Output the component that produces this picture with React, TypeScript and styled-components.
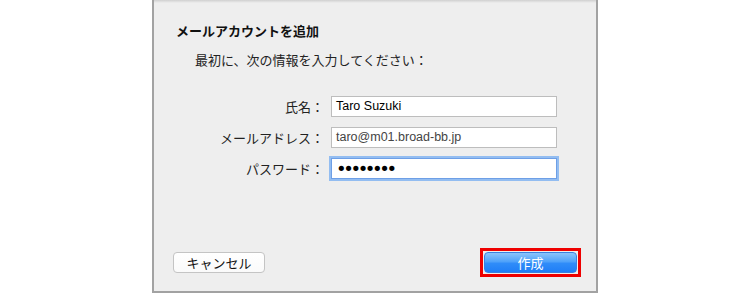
import React from 'react';
import styled, { createGlobalStyle } from 'styled-components';

const GlobalStyle = createGlobalStyle`
  html, body {
    margin: 0;
    padding: 0;
    background: #ffffff;
  }
  body {
    font-family: "Noto Sans CJK JP", "Liberation Sans", sans-serif;
  }
`;

type Field = {
  label: string,
  value: string,
  focused?: boolean,
  muted?: boolean,
}

const fields: Field[] = [
  { label: '氏名：', value: 'Taro Suzuki' },
  { label: 'メールアドレス：', value: 'taro@m01.broad-bb.jp', muted: true },
  { label: 'パスワード：', value: '••••••••', focused: true },
];

export default function App() {
  return (
    <>
      <GlobalStyle />
      <Page>
        <Panel>
          <Title>メールアカウントを追加</Title>
          <Lead>最初に、次の情報を入力してください：</Lead>
          <Form>
            {fields.map((f) => (
              <React.Fragment key={f.label}>
                <Label>{f.label}</Label>
                <Input $focused={f.focused} $muted={f.muted}>
                  {f.focused ? <Dots>{f.value}</Dots> : f.value}
                </Input>
              </React.Fragment>
            ))}
          </Form>
          <Footer>
            <CancelButton>キャンセル</CancelButton>
            <Highlight>
              <PrimaryButton>作成</PrimaryButton>
            </Highlight>
          </Footer>
        </Panel>
      </Page>
    </>
  );
}

const Page = styled.div`
  width: 750px;
  height: 294px;
  display: flex;
  padding-left: 152px;
  box-sizing: border-box;
`;

const Panel = styled.div`
  width: 446px;
  height: 293px;
  box-sizing: border-box;
  background: linear-gradient(#cfcfcf 0px, #e4e4e4 2px, #eeeeee 3px, #eeeeee 100%);
  border: 2px solid #a2a2a2;
  border-top: none;
  display: flex;
  flex-direction: column;
`;

const Title = styled.div`
  margin: 22px 0 0 22px;
  font-size: 13px;
  line-height: 18px;
  font-weight: bold;
  color: #111;
`;

const Lead = styled.div`
  margin: 11px 0 0 41px;
  font-size: 13px;
  line-height: 18px;
  color: #222;
`;

const Form = styled.div`
  margin: 27px 0 0 22px;
  display: grid;
  grid-template-columns: 148px 226px;
  column-gap: 7px;
  row-gap: 10px;
  align-items: center;
`;

const Label = styled.div`
  text-align: right;
  font-size: 13px;
  line-height: 21px;
  color: #222;
`;

const Input = styled.div<{ $focused?: boolean, $muted?: boolean }>`
  height: 21px;
  box-sizing: border-box;
  background: #ffffff;
  border: 1px solid ${(p) => (p.$focused ? '#6e9fe6' : '#bdbdbd')};
  box-shadow: ${(p) => (p.$focused ? '0 0 0 2px #93bdf1' : 'none')};
  padding-left: 4px;
  font-family: "Liberation Sans", "DejaVu Sans", sans-serif;
  font-size: 12.5px;
  line-height: 19px;
  color: ${(p) => (p.$muted ? '#444' : '#000')};
  white-space: nowrap;
`;

const Dots = styled.span`
  display: inline-block;
  font-family: "DejaVu Sans", sans-serif;
  font-size: 18px;
  letter-spacing: -3.4px;
  line-height: 19px;
  height: 19px;
  vertical-align: top;
`;

const Footer = styled.div`
  margin-top: auto;
  margin-bottom: 14px;
  padding: 0 15px 0 19px;
  display: flex;
  justify-content: space-between;
  align-items: center;
`;

const CancelButton = styled.div`
  width: 92px;
  height: 21px;
  box-sizing: border-box;
  background: linear-gradient(#ffffff, #fafafa);
  border: 1px solid #c4c4c4;
  border-radius: 4px;
  font-size: 13px;
  line-height: 19px;
  text-align: center;
  color: #111;
`;

const Highlight = styled.div`
  border: 3px solid #ee0000;
  padding: 1px;
  display: flex;
`;

const PrimaryButton = styled.div`
  width: 93px;
  height: 21px;
  box-sizing: border-box;
  background: linear-gradient(#8cc4fb 0%, #4fa2fa 45%, #2f8cf9 55%, #1f7ef6 100%);
  border: 1px solid #3a7fe0;
  border-radius: 4px;
  font-size: 13px;
  line-height: 19px;
  text-align: center;
  color: #ffffff;
`;
